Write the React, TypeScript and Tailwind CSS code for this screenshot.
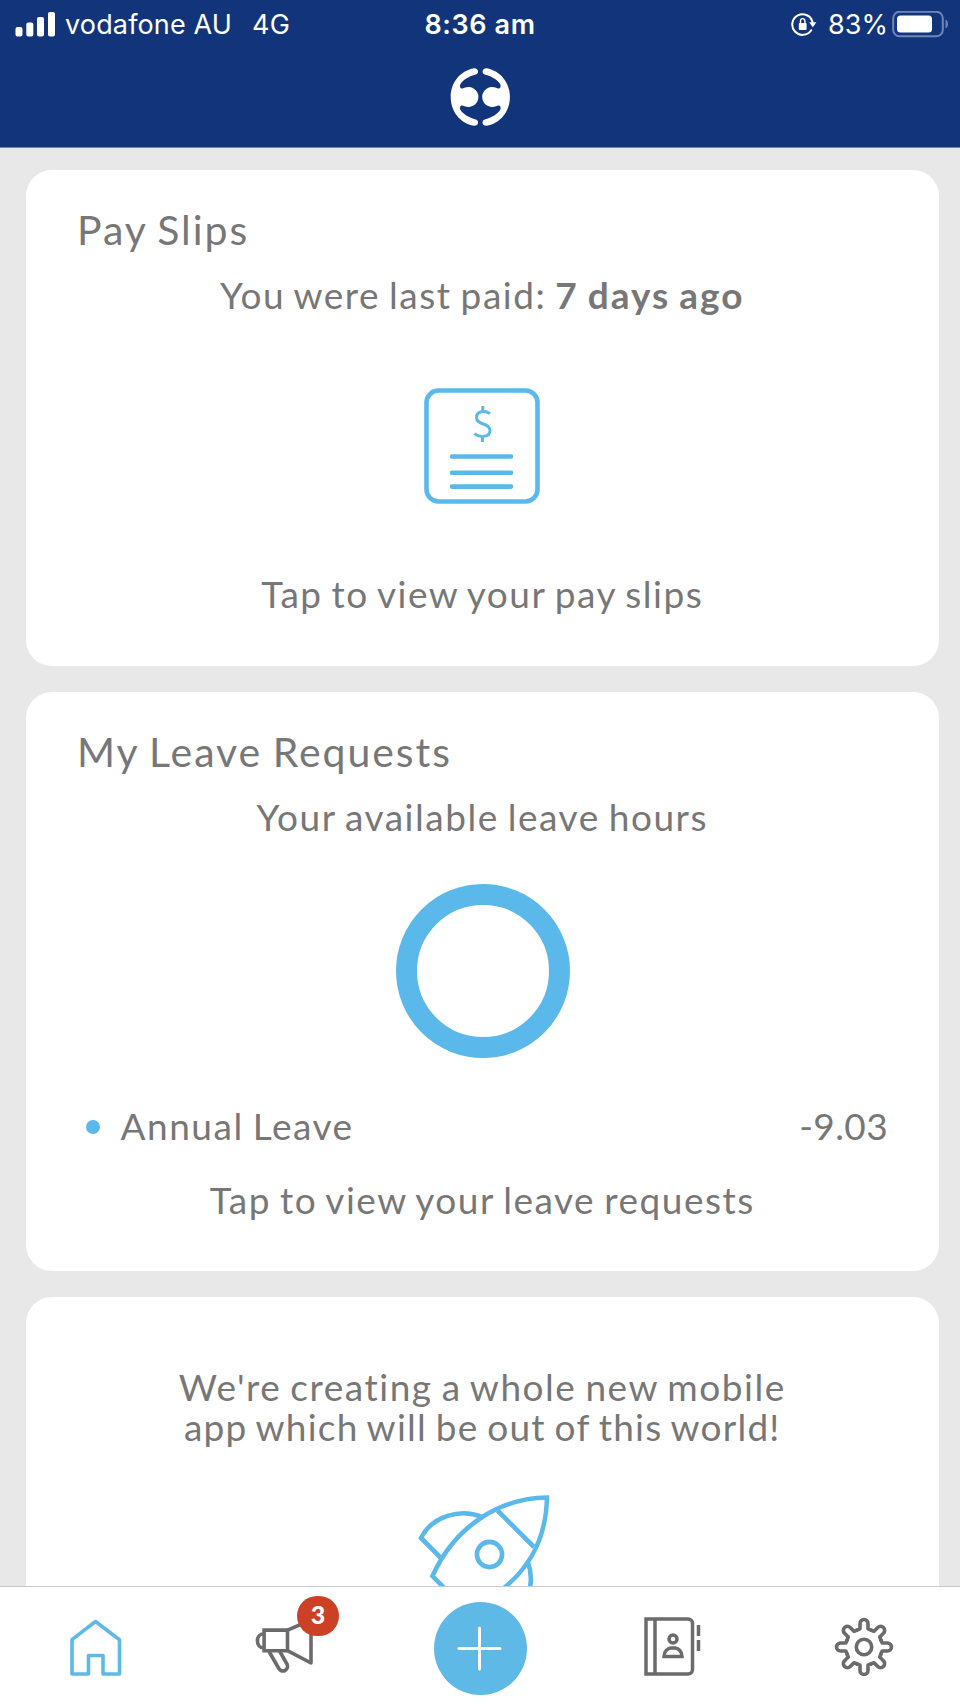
import type { ReactNode } from "react"

type CardProps = {
  className: string
  children: ReactNode
}

function Card({ className, children }: CardProps) {
  return (
    <section className={`flex shrink-0 flex-col rounded-[26px] bg-white ${className}`}>
      {children}
    </section>
  )
}

function StatusBar() {
  return (
    <div className="grid h-12 grid-cols-3 items-center pl-[15px] pr-[10px] text-white font-[Inter,sans-serif] text-[27px] leading-12">
      <div className="flex items-center whitespace-nowrap tracking-[0.15px]">
        <svg width="41" height="26" viewBox="0 0 41 26" fill="currentColor">
          <rect x="0.5" y="15" width="7" height="9.5" rx="2" />
          <rect x="11.3" y="10.5" width="7" height="14" rx="2" />
          <rect x="22" y="5" width="7" height="19.5" rx="2" />
          <rect x="33" y="0" width="7" height="24.5" rx="2" />
        </svg>
        <span className="ml-[9px] pt-px">vodafone AU</span>
        <span className="ml-[20px] pt-px">4G</span>
      </div>

      <span className="pr-[5px] pt-px text-center font-semibold tracking-[0.6px]">8:36 am</span>

      <div className="flex items-center justify-end">
        <svg className="mt-px" width="26" height="26" viewBox="0 0 26 26" fill="none" stroke="currentColor" strokeWidth="2">
          <path d="M21.6 10.3A10.3 10.3 0 1 0 20.2 18.2" strokeLinecap="round" />
          <path d="M18.2 10.2H25.4L21.8 15.2Z" fill="currentColor" stroke="none" />
          <rect x="7.8" y="11" width="7.8" height="7" rx="1" fill="currentColor" stroke="none" />
          <path d="M9.5 11.5V8.8A2.2 2.2 0 0 1 13.9 8.8V11.5" strokeWidth="1.4" />
        </svg>
        <span className="ml-[11px] pt-px">83%</span>
        <svg className="ml-[4px]" width="58" height="28" viewBox="0 0 58 28" fill="none">
          <rect x="1.2" y="0.7" width="49.6" height="24.6" rx="6.5" stroke="#7286b4" strokeWidth="2" />
          <rect x="5" y="4.5" width="35" height="17" rx="3.5" fill="white" />
          <path d="M53.5 8.5V17.500C56.8 16 56.8 10 53.5 8.500Z" fill="#7286b4" />
        </svg>
      </div>
    </div>
  )
}

function Logo() {
  return (
    <svg width="60" height="58" viewBox="0 0 60 58" fill="currentColor">
      <path
        id="half"
        d="M24 0.2C10 2.8 0.7 14.5 0.7 29S10 55.2 24 57.8C29 58 29.5 52 25 51.2C18.5 49.5 13 46 10.2 41.5C9.5 39 10.5 37 12.5 37.6L14.5 38.2A10 10 0 1 0 14.5 19.8L12.5 20.4C10.5 21 9.5 19 10.2 16.5C13 12 18.5 8.5 25 6.8C29.5 6 29 0 24 0.2Z"
      />
      <use href="#half" transform="translate(60.6 0) scale(-1 1)" />
    </svg>
  )
}

function PaySlipIcon() {
  return (
    <svg width="116" height="116" viewBox="0 0 116 116" fill="none" stroke="#5ab9ea" strokeLinecap="round">
      <rect x="2.5" y="2.5" width="111" height="111" rx="12" strokeWidth="4.6" />
      <path d="M66 25.5C61 22.3 52.5 22.5 52.5 29.5C52.5 38 66 34 66 42.5C66 50 55 49.5 50.500 45.5M58.8 18V24M58.4 48V54" strokeWidth="3" strokeLinecap="butt" />
      <path d="M28 68.5H87M28 84.7H87M28 98.6H87" strokeWidth="4.6" />
    </svg>
  )
}

function RocketIcon() {
  return (
    <svg width="132" height="130" viewBox="0 0 132 130" fill="none" stroke="#5ab9ea" strokeWidth="4.6">
      <path d="M129 2.500C86 3 39 27 14.500 81L48 115C100 93 128 55 129 2.500Z" />
      <path d="M79.5 15.5L116 52" />
      <circle cx="71.5" cy="59.5" r="12.6" />
      <path d="M64.5 22C42 13 14 21 3 43L24 64" />
      <path d="M109.500 66C118 88 110 110 89 127L67 106" />
    </svg>
  )
}

function HomeIcon() {
  return (
    <svg width="52" height="57" viewBox="0 0 52 57" fill="none" stroke="#5fb9e7" strokeWidth="3.6" strokeLinejoin="round">
      <path d="M2 20.7L25.5 2.5L49.5 20.7V55H33V36.5H18.5V55H2Z" />
    </svg>
  )
}

function MegaphoneIcon() {
  return (
    <svg width="60" height="57" viewBox="0 0 60 57" fill="none" stroke="#6b6b6b" strokeWidth="3.6">
      <path d="M9.1 9.1H32.5V29.7H9.1Z" />
      <path d="M32.5 9.1L56 -1V42L32.5 29.7" strokeLinejoin="round" />
      <path d="M9.1 12.8C0.2 12.8 0.2 27 9.1 27" />
      <path d="M14 30.5L23.8 47.500C27.5 53 34.500 48.5 32 43L24.800 30.5" />
    </svg>
  )
}

function ContactsIcon() {
  return (
    <svg width="58" height="60" viewBox="0 0 58 60" fill="none" stroke="#6b6b6b" strokeWidth="3.5">
      <path d="M2 2H44A4.5 4.5 0 0 1 48.5 6.5V52.5A4.5 4.5 0 0 1 44 57H2ZM11 2V57" />
      <circle cx="29" cy="22" r="4" />
      <path d="M20 39.5H38C38 34 34 31 31 31H27C24 31 20 34 20 39.5Z" />
      <path d="M54.5 8V19M54.5 23V34" />
    </svg>
  )
}

const teeth = [0, 45, 90, 135, 180, 225, 270, 315]

function GearIcon() {
  return (
    <svg width="60" height="60" viewBox="-30 -30 60 60" fill="none" stroke="#6b6b6b" strokeWidth="3.6" strokeLinejoin="round">
      <circle r="7.7" />
      {teeth.map((angle) => (
        <path
          key={angle}
          transform={`rotate(${angle})`}
          d="M-7.2 -16.8L-4 -18.2V-23.5A4 4 0 0 1 4 -23.5V-18.2L7.2 -16.8"
          strokeLinecap="round"
        />
      ))}
    </svg>
  )
}

function TabBar() {
  return (
    <nav className="flex h-[121px] shrink-0 border-t border-[#c9c9c9] bg-white">
      <div className="flex w-1/5 justify-center pr-px pt-[32px]">
        <HomeIcon />
      </div>

      <div className="flex w-1/5 justify-center pr-[6px] pt-[34px]">
        <div className="relative h-[57px] w-[60px]">
          <MegaphoneIcon />
          <span className="absolute -top-[25px] left-[42px] flex h-10 w-[42px] items-center justify-center rounded-[20px] bg-[#cc4125] pb-[4px] font-[Lato,sans-serif] text-[25px] font-black tracking-normal text-white">
            3
          </span>
        </div>
      </div>

      <div className="flex w-1/5 justify-center pt-[15px]">
        <div className="flex size-[93px] items-center justify-center rounded-full bg-[#5fb9e7] pr-[2px]">
          <svg width="45" height="45" viewBox="0 0 45 45" stroke="white" strokeWidth="3" strokeLinecap="round">
            <path d="M22.5 2V43M2 22.5H43" />
          </svg>
        </div>
      </div>

      <div className="flex w-1/5 justify-center pl-[2px] pt-[30px]">
        <ContactsIcon />
      </div>

      <div className="flex w-1/5 justify-center pr-px pt-[30px]">
        <GearIcon />
      </div>
    </nav>
  )
}

export default function App() {
  return (
    <div className="flex h-[1707px] w-[960px] flex-col overflow-hidden bg-[#e8e8e8] font-[Lato,sans-serif] text-[37px] leading-10 tracking-[1.53px] text-[#777777]">
      <header className="h-[148px] shrink-0 border-b border-[#7283aa] bg-[#12347a] tracking-normal text-white">
        <StatusBar />
        <div className="mt-[20px] flex justify-center">
          <Logo />
        </div>
      </header>

      <main className="flex min-h-0 flex-1 flex-col gap-[26px] overflow-hidden pl-[25.5px] pr-[21px] pt-[22px] [word-spacing:-2px]">
        <Card className="h-[496px]">
          <h2 className="ml-[51.5px] mt-[36px] text-[41px] leading-12 tracking-[1.95px]">Pay Slips</h2>
          <p className="mt-[21px] text-center">
            You were last paid: <b className="font-bold tracking-[2px]">7 days ago</b>
          </p>
          <div className="mt-[73px] flex justify-center pr-px">
            <PaySlipIcon />
          </div>
          <p className="mt-[70px] text-center">Tap to view your pay slips</p>
        </Card>

        <Card className="h-[579px]">
          <h2 className="ml-[51.5px] mt-[36px] text-[41px] leading-12 tracking-[1.95px]">My Leave Requests</h2>
          <p className="mt-[21px] text-center">Your available leave hours</p>
          <div className="mt-[47px] flex justify-center pl-px">
            <div className="size-[174px] rounded-full border-[21px] border-[#5ab9ea]" />
          </div>
          <div className="mt-[48px] flex items-center pl-[60px] pr-[51px]">
            <span className="mt-px size-[14px] rounded-full bg-[#5ab9ea]" />
            <span className="ml-[21px]">Annual Leave</span>
            <span className="ml-auto tracking-[0.4px]">-9.03</span>
          </div>
          <p className="mt-[34px] text-center">Tap to view your leave requests</p>
        </Card>

        <Card className="h-[500px]">
          <p className="mt-[70px] text-center">
            We're creating a whole new mobile
            <br />
            <span className="tracking-[1.25px]">app which will be out of this world!</span>
          </p>
          <div className="mt-[48px] flex justify-center pl-[4px]">
            <RocketIcon />
          </div>
        </Card>
      </main>

      <TabBar />
    </div>
  )
}
